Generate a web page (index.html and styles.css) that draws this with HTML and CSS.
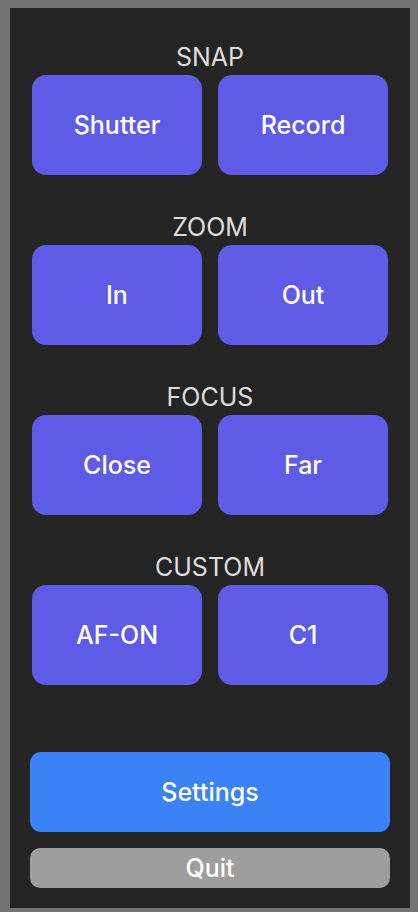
FILE: index.html
```html
<!DOCTYPE html>
<html>
<head>
  <title>Remote</title>
  <link rel="stylesheet" href="styles.css">
</head>
<body>
  <div id="panel">
    <div class="section">
      <div class="section-title">SNAP</div>
      <div class="button-row">
        <button class="action">Shutter</button>
        <button class="action">Record</button>
      </div>
    </div>

    <div class="section">
      <div class="section-title">ZOOM</div>
      <div class="button-row">
        <button class="action">In</button>
        <button class="action">Out</button>
      </div>
    </div>

    <div class="section">
      <div class="section-title">FOCUS</div>
      <div class="button-row">
        <button class="action">Close</button>
        <button class="action">Far</button>
      </div>
    </div>

    <div class="section">
      <div class="section-title">CUSTOM</div>
      <div class="button-row">
        <button class="action">AF-ON</button>
        <button class="action">C1</button>
      </div>
    </div>

    <div id="footer">
      <button id="settings-button">Settings</button>
      <button id="quit-button">Quit</button>
    </div>
  </div>
</body>
</html>
```

FILE: styles.css
```css
/* Window frame */
body {
  margin: 0;
  padding: 8px 8px 4px 10px;
  background-color: #737373;
  font-family: Inter, "Noto Sans", sans-serif;
}

#panel {
  width: 400px;
  height: 900px;
  box-sizing: border-box;
  padding: 35px 20px 20px;
  background-color: #242424;
  display: flex;
  flex-direction: column;
  gap: 38px;
}

.section {
  display: flex;
  flex-direction: column;
  gap: 4px;
}

.section-title {
  color: #dedede;
  font-size: 25px;
  line-height: 28px;
  text-align: center;
}

.button-row {
  display: grid;
  grid-template-columns: 1fr 1fr;
  gap: 16px;
  padding: 0 2px;
}

button {
  border: none;
  color: white;
  font-family: inherit;
  font-size: 25px;
  font-weight: 500;
  cursor: pointer;
}

.action {
  height: 100px;
  border-radius: 14px;
  background-color: #5e5ce6;
}

#footer {
  margin-top: auto;
  display: flex;
  flex-direction: column;
  gap: 16px;
}

#settings-button {
  height: 80px;
  border-radius: 11px;
  background-color: #3b82f6;
}

#quit-button {
  height: 40px;
  border-radius: 10px;
  background-color: #9e9e9e;
  padding: 0;
}
```
